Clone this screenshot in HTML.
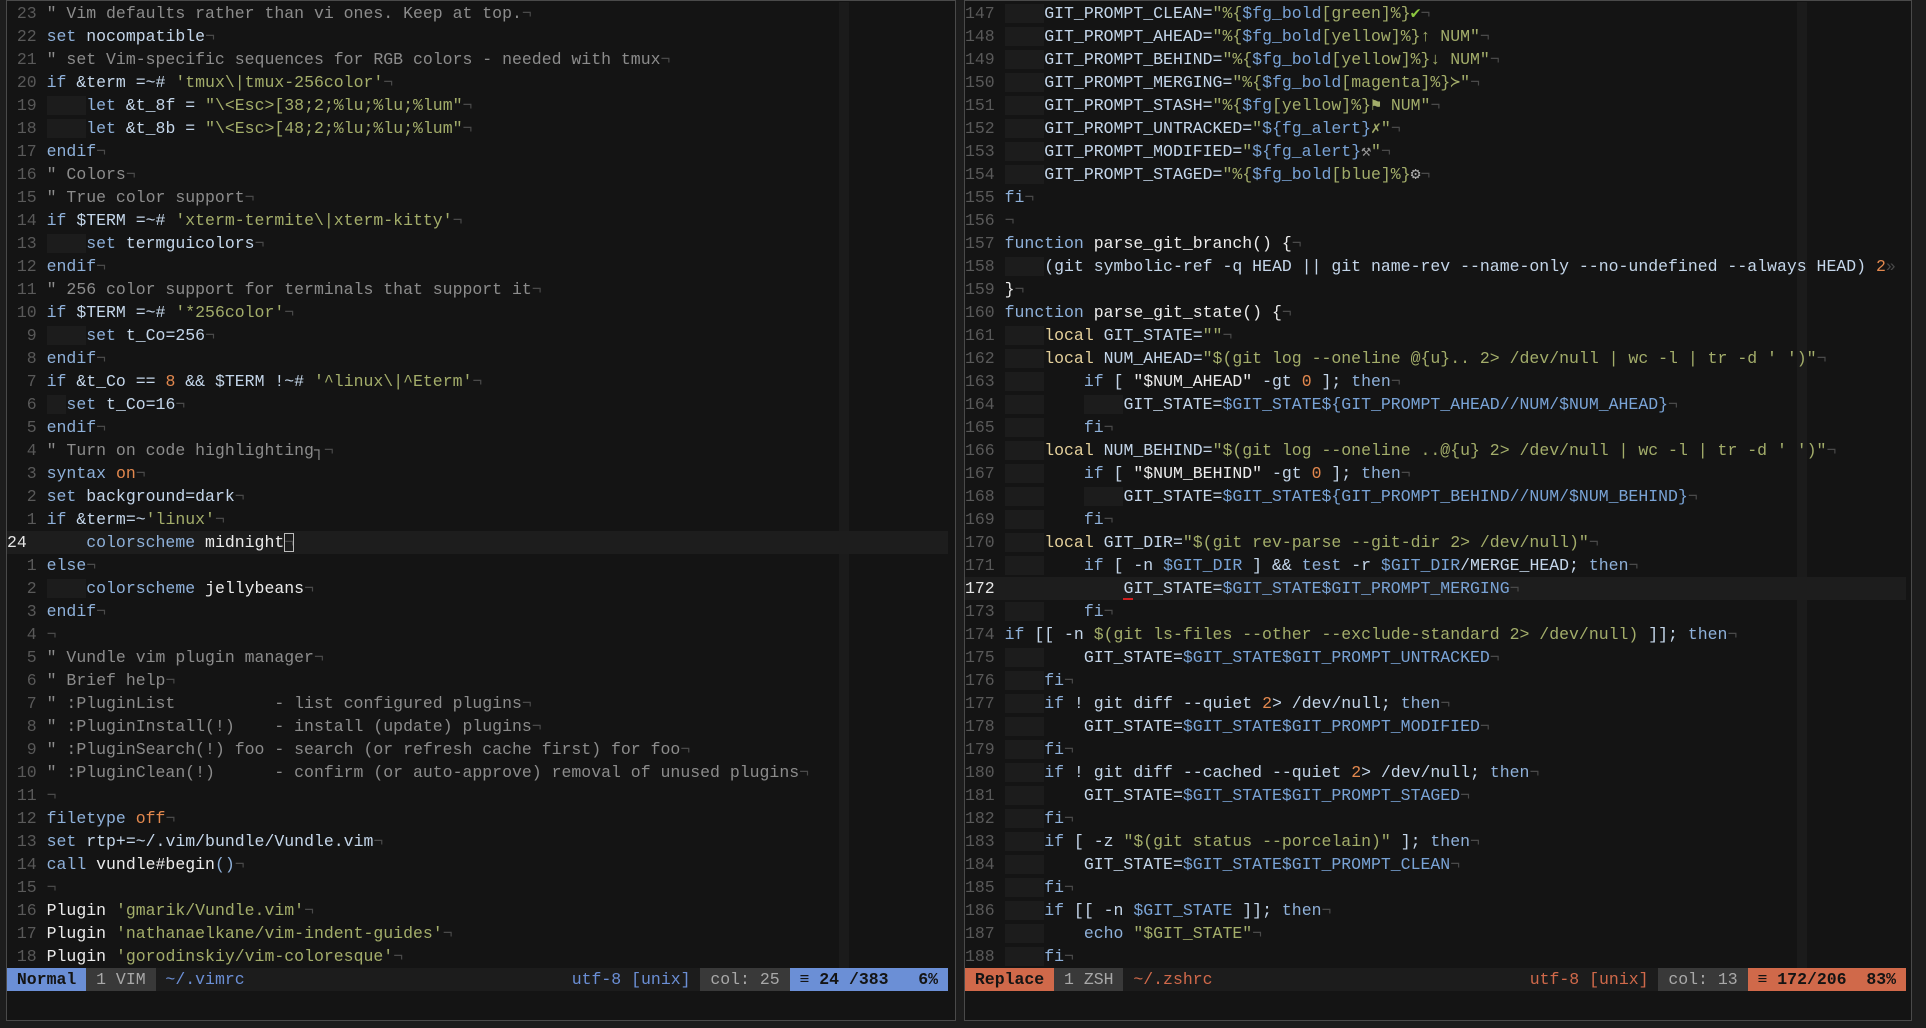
<!DOCTYPE html>
<html><head><meta charset="utf-8"><style>
html,body{margin:0;padding:0;}
body{width:1926px;height:1028px;background:#1d1d1d;position:relative;overflow:hidden;font-family:"Liberation Mono","DejaVu Sans Mono",monospace;font-size:16.5px;}
.pane{position:absolute;top:0;height:1021px;background:#141414;border:1px solid #4a4a4a;box-sizing:border-box;overflow:hidden;}
.cc{position:absolute;top:1px;height:966px;width:10px;background:#1b1b1b;}
.rows{position:absolute;top:1px;left:0;width:941px;}
.r{height:23px;line-height:23px;white-space:pre;color:#c4d6ea;position:relative;}
.ln{color:#595959;}
.cur{background:#1d1d1d;}
.cur .ln{color:#e6e6e6;}
.c{color:#8c8c8c}.k{color:#8fb1da}.i{color:#c4d6ea}.s{color:#a3ad6a}.o{color:#e2884e}.w{color:#ececec}.y{color:#e3cf9a}.v{color:#79a3d6}.e{color:#4a4a4a}.g{background:#1c1c1c}.gr{color:#8cc63f}
.st{position:absolute;top:967px;left:0;height:23px;line-height:23px;white-space:pre;background:#1c1c1c;width:941px;}
.st span{display:inline-block;height:23px;}
</style></head><body>

<div class="pane" style="left:6px;width:950px;">
<div class="cc" style="left:832px"></div>
<div class="rows">
<div class="r"><span class="ln"> 23 </span><span class="c">" Vim defaults rather than vi ones. Keep at top.</span><span class="e">¬</span></div>
<div class="r"><span class="ln"> 22 </span><span class="k">set</span> nocompatible<span class="e">¬</span></div>
<div class="r"><span class="ln"> 21 </span><span class="c">" set Vim-specific sequences for RGB colors - needed with tmux</span><span class="e">¬</span></div>
<div class="r"><span class="ln"> 20 </span><span class="k">if</span> &amp;term =~# <span class="s">'tmux\|tmux-256color'</span><span class="e">¬</span></div>
<div class="r"><span class="ln"> 19 </span><span class="g">    </span><span class="k">let</span> &amp;t_8f = <span class="s">"\&lt;Esc&gt;[38;2;%lu;%lu;%lum"</span><span class="e">¬</span></div>
<div class="r"><span class="ln"> 18 </span><span class="g">    </span><span class="k">let</span> &amp;t_8b = <span class="s">"\&lt;Esc&gt;[48;2;%lu;%lu;%lum"</span><span class="e">¬</span></div>
<div class="r"><span class="ln"> 17 </span><span class="k">endif</span><span class="e">¬</span></div>
<div class="r"><span class="ln"> 16 </span><span class="c">" Colors</span><span class="e">¬</span></div>
<div class="r"><span class="ln"> 15 </span><span class="c">" True color support</span><span class="e">¬</span></div>
<div class="r"><span class="ln"> 14 </span><span class="k">if</span> $TERM =~# <span class="s">'xterm-termite\|xterm-kitty'</span><span class="e">¬</span></div>
<div class="r"><span class="ln"> 13 </span><span class="g">    </span><span class="k">set</span> termguicolors<span class="e">¬</span></div>
<div class="r"><span class="ln"> 12 </span><span class="k">endif</span><span class="e">¬</span></div>
<div class="r"><span class="ln"> 11 </span><span class="c">" 256 color support for terminals that support it</span><span class="e">¬</span></div>
<div class="r"><span class="ln"> 10 </span><span class="k">if</span> $TERM =~# <span class="s">'*256color'</span><span class="e">¬</span></div>
<div class="r"><span class="ln">  9 </span><span class="g">    </span><span class="k">set</span> t_Co=256<span class="e">¬</span></div>
<div class="r"><span class="ln">  8 </span><span class="k">endif</span><span class="e">¬</span></div>
<div class="r"><span class="ln">  7 </span><span class="k">if</span> &amp;t_Co == <span class="o">8</span> &amp;&amp; $TERM !~# <span class="s">'^linux\|^Eterm'</span><span class="e">¬</span></div>
<div class="r"><span class="ln">  6 </span><span class="g">  </span><span class="k">set</span> t_Co=16<span class="e">¬</span></div>
<div class="r"><span class="ln">  5 </span><span class="k">endif</span><span class="e">¬</span></div>
<div class="r"><span class="ln">  4 </span><span class="c">" Turn on code highlighting┐</span><span class="e">¬</span></div>
<div class="r"><span class="ln">  3 </span><span class="k">syntax</span> <span class="o">on</span><span class="e">¬</span></div>
<div class="r"><span class="ln">  2 </span><span class="k">set</span> background=dark<span class="e">¬</span></div>
<div class="r"><span class="ln">  1 </span><span class="k">if</span> &amp;term=~<span class="s">'linux'</span><span class="e">¬</span></div>
<div class="r cur"><span class="ln">24  </span>    <span class="k">colorscheme</span> <span class="w">midnight</span><span class="e" style="outline:1px solid #bbb;outline-offset:-1px">¬</span></div>
<div class="r"><span class="ln">  1 </span><span class="k">else</span><span class="e">¬</span></div>
<div class="r"><span class="ln">  2 </span><span class="g">    </span><span class="k">colorscheme</span> <span class="w">jellybeans</span><span class="e">¬</span></div>
<div class="r"><span class="ln">  3 </span><span class="k">endif</span><span class="e">¬</span></div>
<div class="r"><span class="ln">  4 </span><span class="e">¬</span></div>
<div class="r"><span class="ln">  5 </span><span class="c">" Vundle vim plugin manager</span><span class="e">¬</span></div>
<div class="r"><span class="ln">  6 </span><span class="c">" Brief help</span><span class="e">¬</span></div>
<div class="r"><span class="ln">  7 </span><span class="c">" :PluginList          - list configured plugins</span><span class="e">¬</span></div>
<div class="r"><span class="ln">  8 </span><span class="c">" :PluginInstall(!)    - install (update) plugins</span><span class="e">¬</span></div>
<div class="r"><span class="ln">  9 </span><span class="c">" :PluginSearch(!) foo - search (or refresh cache first) for foo</span><span class="e">¬</span></div>
<div class="r"><span class="ln"> 10 </span><span class="c">" :PluginClean(!)      - confirm (or auto-approve) removal of unused plugins</span><span class="e">¬</span></div>
<div class="r"><span class="ln"> 11 </span><span class="e">¬</span></div>
<div class="r"><span class="ln"> 12 </span><span class="k">filetype</span> <span class="o">off</span><span class="e">¬</span></div>
<div class="r"><span class="ln"> 13 </span><span class="k">set</span> rtp+=~/.vim/bundle/Vundle.vim<span class="e">¬</span></div>
<div class="r"><span class="ln"> 14 </span><span class="k">call</span> <span class="w">vundle#begin</span><span class="k">()</span><span class="e">¬</span></div>
<div class="r"><span class="ln"> 15 </span><span class="e">¬</span></div>
<div class="r"><span class="ln"> 16 </span><span class="w">Plugin</span> <span class="s">'gmarik/Vundle.vim'</span><span class="e">¬</span></div>
<div class="r"><span class="ln"> 17 </span><span class="w">Plugin</span> <span class="s">'nathanaelkane/vim-indent-guides'</span><span class="e">¬</span></div>
<div class="r"><span class="ln"> 18 </span><span class="w">Plugin</span> <span class="s">'gorodinskiy/vim-coloresque'</span><span class="e">¬</span></div>
</div>
<div class="st"><span style="background:#6b8fd6;color:#141414;font-weight:bold"> Normal </span><span style="background:#393939;color:#a8a8a8"> 1 VIM </span><span style="color:#6b8fd6"> ~/.vimrc</span><span style="position:absolute;right:0;top:0"><span style="color:#6b8fd6">utf-8 [unix] </span><span style="background:#393939;color:#a8a8a8"> col: 25 </span><span style="background:#6b8fd6;color:#141414;font-weight:bold"> ≡ 24 /383   6% </span></span></div>
</div>

<div class="pane" style="left:964px;width:948px;">
<div class="cc" style="left:832px"></div>
<div class="rows">
<div class="r"><span class="ln">147 </span><span class="g">    </span>GIT_PROMPT_CLEAN=<span class="s">"%{</span><span class="v">$fg_bold</span><span class="s">[green]%}</span><span class="gr">✔</span><span class="e">¬</span></div>
<div class="r"><span class="ln">148 </span><span class="g">    </span>GIT_PROMPT_AHEAD=<span class="s">"%{</span><span class="v">$fg_bold</span><span class="s">[yellow]%}↑ NUM"</span><span class="e">¬</span></div>
<div class="r"><span class="ln">149 </span><span class="g">    </span>GIT_PROMPT_BEHIND=<span class="s">"%{</span><span class="v">$fg_bold</span><span class="s">[yellow]%}↓ NUM"</span><span class="e">¬</span></div>
<div class="r"><span class="ln">150 </span><span class="g">    </span>GIT_PROMPT_MERGING=<span class="s">"%{</span><span class="v">$fg_bold</span><span class="s">[magenta]%}≻"</span><span class="e">¬</span></div>
<div class="r"><span class="ln">151 </span><span class="g">    </span>GIT_PROMPT_STASH=<span class="s">"%{</span><span class="v">$fg</span><span class="s">[yellow]%}⚑ NUM"</span><span class="e">¬</span></div>
<div class="r"><span class="ln">152 </span><span class="g">    </span>GIT_PROMPT_UNTRACKED=<span class="s">"</span><span class="v">${fg_alert}</span><span class="s">✗"</span><span class="e">¬</span></div>
<div class="r"><span class="ln">153 </span><span class="g">    </span>GIT_PROMPT_MODIFIED=<span class="s">"</span><span class="v">${fg_alert}</span><span style="color:#999">⚒</span><span class="s">"</span><span class="e">¬</span></div>
<div class="r"><span class="ln">154 </span><span class="g">    </span>GIT_PROMPT_STAGED=<span class="s">"%{</span><span class="v">$fg_bold</span><span class="s">[blue]%}</span><span style="color:#aaa">⚙</span><span class="e">¬</span></div>
<div class="r"><span class="ln">155 </span><span class="k">fi</span><span class="e">¬</span></div>
<div class="r"><span class="ln">156 </span><span class="e">¬</span></div>
<div class="r"><span class="ln">157 </span><span class="k">function</span> <span class="w">parse_git_branch() {</span><span class="e">¬</span></div>
<div class="r"><span class="ln">158 </span><span class="g">    </span>(git symbolic-ref -q HEAD || git name-rev --name-only --no-undefined --always HEAD) <span class="o">2</span><span class="e">»</span></div>
<div class="r"><span class="ln">159 </span><span class="w">}</span><span class="e">¬</span></div>
<div class="r"><span class="ln">160 </span><span class="k">function</span> <span class="w">parse_git_state() {</span><span class="e">¬</span></div>
<div class="r"><span class="ln">161 </span><span class="g">    </span><span class="y">local</span> GIT_STATE=<span class="s">""</span><span class="e">¬</span></div>
<div class="r"><span class="ln">162 </span><span class="g">    </span><span class="y">local</span> NUM_AHEAD=<span class="s">"$(git log --oneline @{u}.. 2&gt; /dev/null | wc -l | tr -d ' ')"</span><span class="e">¬</span></div>
<div class="r"><span class="ln">163 </span><span class="g">    </span>    <span class="k">if</span> [ <span class="w">"$NUM_AHEAD"</span> -gt <span class="o">0</span> ]; <span class="k">then</span><span class="e">¬</span></div>
<div class="r"><span class="ln">164 </span><span class="g">    </span>    <span class="g">    </span>GIT_STATE=<span class="v">$GIT_STATE${GIT_PROMPT_AHEAD//NUM/$NUM_AHEAD}</span><span class="e">¬</span></div>
<div class="r"><span class="ln">165 </span><span class="g">    </span>    <span class="k">fi</span><span class="e">¬</span></div>
<div class="r"><span class="ln">166 </span><span class="g">    </span><span class="y">local</span> NUM_BEHIND=<span class="s">"$(git log --oneline ..@{u} 2&gt; /dev/null | wc -l | tr -d ' ')"</span><span class="e">¬</span></div>
<div class="r"><span class="ln">167 </span><span class="g">    </span>    <span class="k">if</span> [ <span class="w">"$NUM_BEHIND"</span> -gt <span class="o">0</span> ]; <span class="k">then</span><span class="e">¬</span></div>
<div class="r"><span class="ln">168 </span><span class="g">    </span>    <span class="g">    </span>GIT_STATE=<span class="v">$GIT_STATE${GIT_PROMPT_BEHIND//NUM/$NUM_BEHIND}</span><span class="e">¬</span></div>
<div class="r"><span class="ln">169 </span><span class="g">    </span>    <span class="k">fi</span><span class="e">¬</span></div>
<div class="r"><span class="ln">170 </span><span class="g">    </span><span class="y">local</span> GIT_DIR=<span class="s">"$(git rev-parse --git-dir 2&gt; /dev/null)"</span><span class="e">¬</span></div>
<div class="r"><span class="ln">171 </span><span class="g">    </span>    <span class="k">if</span> [ -n <span class="v">$GIT_DIR</span> ] &amp;&amp; <span class="k">test</span> -r <span class="v">$GIT_DIR</span>/MERGE_HEAD; <span class="k">then</span><span class="e">¬</span></div>
<div class="r cur"><span class="ln">172 </span>            <span style="border-bottom:2px solid #d02020">G</span>IT_STATE=<span class="v">$GIT_STATE$GIT_PROMPT_MERGING</span><span class="e">¬</span></div>
<div class="r"><span class="ln">173 </span><span class="g">    </span>    <span class="k">fi</span><span class="e">¬</span></div>
<div class="r"><span class="ln">174 </span><span class="k">if</span> [[ -n <span class="s">$(git ls-files --other --exclude-standard 2&gt; /dev/null)</span> ]]; <span class="k">then</span><span class="e">¬</span></div>
<div class="r"><span class="ln">175 </span><span class="g">    </span>    GIT_STATE=<span class="v">$GIT_STATE$GIT_PROMPT_UNTRACKED</span><span class="e">¬</span></div>
<div class="r"><span class="ln">176 </span><span class="g">    </span><span class="k">fi</span><span class="e">¬</span></div>
<div class="r"><span class="ln">177 </span><span class="g">    </span><span class="k">if</span> ! git diff --quiet <span class="o">2</span>&gt; /dev/null; <span class="k">then</span><span class="e">¬</span></div>
<div class="r"><span class="ln">178 </span><span class="g">    </span>    GIT_STATE=<span class="v">$GIT_STATE$GIT_PROMPT_MODIFIED</span><span class="e">¬</span></div>
<div class="r"><span class="ln">179 </span><span class="g">    </span><span class="k">fi</span><span class="e">¬</span></div>
<div class="r"><span class="ln">180 </span><span class="g">    </span><span class="k">if</span> ! git diff --cached --quiet <span class="o">2</span>&gt; /dev/null; <span class="k">then</span><span class="e">¬</span></div>
<div class="r"><span class="ln">181 </span><span class="g">    </span>    GIT_STATE=<span class="v">$GIT_STATE$GIT_PROMPT_STAGED</span><span class="e">¬</span></div>
<div class="r"><span class="ln">182 </span><span class="g">    </span><span class="k">fi</span><span class="e">¬</span></div>
<div class="r"><span class="ln">183 </span><span class="g">    </span><span class="k">if</span> [ -z <span class="s">"$(git status --porcelain)"</span> ]; <span class="k">then</span><span class="e">¬</span></div>
<div class="r"><span class="ln">184 </span><span class="g">    </span>    GIT_STATE=<span class="v">$GIT_STATE$GIT_PROMPT_CLEAN</span><span class="e">¬</span></div>
<div class="r"><span class="ln">185 </span><span class="g">    </span><span class="k">fi</span><span class="e">¬</span></div>
<div class="r"><span class="ln">186 </span><span class="g">    </span><span class="k">if</span> [[ -n <span class="v">$GIT_STATE</span> ]]; <span class="k">then</span><span class="e">¬</span></div>
<div class="r"><span class="ln">187 </span><span class="g">    </span>    <span class="k">echo</span> <span class="s">"$GIT_STATE"</span><span class="e">¬</span></div>
<div class="r"><span class="ln">188 </span><span class="g">    </span><span class="k">fi</span><span class="e">¬</span></div>
</div>
<div class="st"><span style="background:#d0694a;color:#141414;font-weight:bold"> Replace </span><span style="background:#393939;color:#a8a8a8"> 1 ZSH </span><span style="color:#d0694a"> ~/.zshrc</span><span style="position:absolute;right:0;top:0"><span style="color:#d0694a">utf-8 [unix] </span><span style="background:#393939;color:#a8a8a8"> col: 13 </span><span style="background:#d0694a;color:#141414;font-weight:bold"> ≡ 172/206  83% </span></span></div>
</div>
</body></html>
